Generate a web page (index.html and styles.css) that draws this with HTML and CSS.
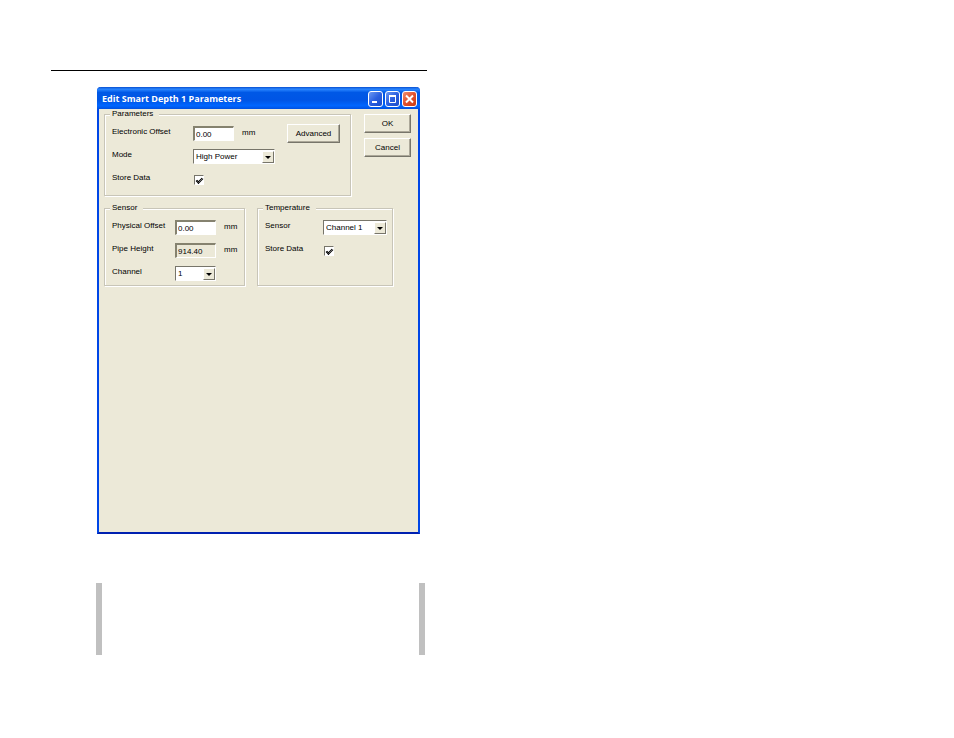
FILE: index.html
```html
<!DOCTYPE html>
<html lang="en">
<head>
  <meta charset="UTF-8">
  <title>Edit Smart Depth 1 Parameters</title>
  <link rel="stylesheet" href="styles.css">
</head>
<body>
  <main class="sheet">
    <hr class="rule">
    <section class="window">
      <header class="titlebar">
        <h1>Edit Smart Depth 1 Parameters</h1>
        <button type="button" class="caption" aria-label="Minimize">
          <svg viewBox="0 0 13 14"><path d="M3 10h5" stroke="#fff" stroke-width="2"/></svg>
        </button>
        <button type="button" class="caption" aria-label="Maximize">
          <svg viewBox="0 0 13 14"><path d="M3.5 4v6.5h6V4" fill="none" stroke="#fff"/><path d="M3 4h7" stroke="#fff" stroke-width="2"/></svg>
        </button>
        <button type="button" class="caption close" aria-label="Close">
          <svg viewBox="0 0 13 14"><path d="M3 3.5l7 7M10 3.5l-7 7" stroke="#fff" stroke-width="2"/></svg>
        </button>
      </header>
      <form class="content">
        <div class="top">
          <fieldset class="parameters">
            <legend>Parameters</legend>
            <div class="row">
              <label for="electronic-offset">Electronic Offset</label>
              <input type="text" id="electronic-offset" value="0.00">
              <span class="unit">mm</span>
              <button type="button" class="btn advanced">Advanced</button>
            </div>
            <div class="row">
              <label for="mode">Mode</label>
              <span class="combo wide">
                <select id="mode"><option>High Power</option></select>
                <svg viewBox="0 0 10 10"><path d="M2 4h6L5 7z"/></svg>
              </span>
            </div>
            <div class="row">
              <label for="store-data">Store Data</label>
              <input type="checkbox" id="store-data" checked>
            </div>
          </fieldset>
          <div class="actions">
            <button type="button" class="btn">OK</button>
            <button type="button" class="btn">Cancel</button>
          </div>
        </div>
        <div class="bottom">
          <fieldset class="sensor">
            <legend>Sensor</legend>
            <div class="row">
              <label for="physical-offset">Physical Offset</label>
              <input type="text" id="physical-offset" value="0.00">
              <span class="unit">mm</span>
            </div>
            <div class="row">
              <label for="pipe-height">Pipe Height</label>
              <input type="text" id="pipe-height" value="914.40" readonly>
              <span class="unit">mm</span>
            </div>
            <div class="row">
              <label for="channel">Channel</label>
              <span class="combo">
                <select id="channel"><option>1</option></select>
                <svg viewBox="0 0 10 10"><path d="M2 4h6L5 7z"/></svg>
              </span>
            </div>
          </fieldset>
          <fieldset class="temperature">
            <legend>Temperature</legend>
            <div class="row">
              <label for="temp-sensor">Sensor</label>
              <span class="combo medium">
                <select id="temp-sensor"><option>Channel 1</option></select>
                <svg viewBox="0 0 10 10"><path d="M2 4h6L5 7z"/></svg>
              </span>
            </div>
            <div class="row">
              <label for="temp-store">Store Data</label>
              <input type="checkbox" id="temp-store" checked>
            </div>
          </fieldset>
        </div>
      </form>
    </section>
    <aside class="note"></aside>
  </main>
</body>
</html>
```
FILE: styles.css
```css
* { box-sizing: border-box; }
body { margin: 0; padding: 70px 51px; background: #fff; color: #000; font: 8px/10px "Liberation Sans", Arial, sans-serif; }
input, select, button { font: inherit; color: inherit; margin: 0; }
.sheet { max-width: 376px; }
.rule { margin: 0; border: 0; border-top: 1px solid #000; }

.window { margin: 16px 7px 0 46px; border: 2px solid #0046e6; border-top: 0; border-bottom-color: #0020b0; border-radius: 4px 4px 0 0; background: #ece9d8; }
.titlebar { display: flex; align-items: center; gap: 2px; height: 22px; margin: 0 -2px; padding: 2px 3px 0 5px; border-radius: 4px 4px 0 0; background: linear-gradient(#0a50d0, #2a86ff 10%, #0058e6 25%, #0055e5 60%, #0066ff 85%, #0050e0); }
.titlebar h1 { flex: 1; margin: 0; color: #fff; font: bold 9px/12px "Open Sans", sans-serif; white-space: nowrap; }
.caption { width: 15px; height: 16px; padding: 0; border: 1px solid #fff; border-radius: 3px; background: linear-gradient(135deg, #6c98f2, #2a5fe0 50%, #1c4cc8); }
.caption svg { display: block; width: 13px; height: 14px; }
.close { background: linear-gradient(135deg, #f09070, #e0502c 50%, #c83c14); }

.content { min-height: 423px; padding: 0 7px 0 5px; }
.top { display: flex; gap: 13px; }
.bottom { display: grid; grid-template-columns: 141fr 136fr; gap: 12px; margin: 7px 18px 0 0; }
.actions { display: flex; flex-direction: column; gap: 5px; width: 47px; padding-top: 5px; }

fieldset { min-width: 0; margin: 0; padding: 3px 6px 0 7px; border: 1px solid #c8c5b8; box-shadow: inset 1px 1px #fff, 1px 1px #fff; }
legend { height: 10px; margin-left: -2px; padding: 0 6px 0 2px; background: #ece9d8; }
.parameters { flex: 1; padding-right: 10px; padding-bottom: 4px; }
.row { display: flex; align-items: center; gap: 8px; height: 23px; }
.row label { flex: none; padding-bottom: 4px; white-space: nowrap; }
.unit { padding-bottom: 1px; }
.parameters label { width: 73px; }
.sensor label { width: 55px; }
.temperature label { width: 50px; }

input[type='text'] { width: 41px; height: 15px; padding: 0 1px; border: 2px solid; border-color: #85826f #fff #fff #85826f; border-width: 2px 1px 1px 2px; background: #fff; }
input[readonly] { background: #ece9d8; }
input[type='checkbox'] { appearance: none; width: 10px; height: 10px; margin-left: 1px; border: 1px solid; border-color: #77756a #fff #fff #77756a; background: #fff; }
input[type='checkbox']:checked::before { content: ""; display: block; width: 6px; height: 3px; margin: 2px 1px; border: solid #000; border-width: 0 0 1px 1px; box-shadow: inset 1px -1px #000; transform: rotate(-45deg); }

.btn { height: 19px; padding: 0; border: 1px solid; border-color: #fff #77756a #77756a #fff; box-shadow: inset -1px -1px #aca899; background: #ece9d8; }
.advanced { width: 53px; margin-left: auto; }

.combo { position: relative; flex: none; width: 41px; height: 15px; }
.combo.wide { width: 82px; }
.combo.medium { width: 64px; }
.combo select { appearance: none; display: block; width: 100%; height: 15px; padding: 1px 12px 0 2px; border: 1px solid; border-color: #77756a #fff #fff #77756a; border-radius: 0; background: #fff; }
.combo svg { position: absolute; top: 2px; right: 1px; width: 12px; height: 12px; border: 1px solid; border-color: #fff #77756a #77756a #fff; background: #ece9d8; pointer-events: none; }

.note { height: 72px; margin: 49px 2px 0 45px; border: solid #c0c0c0; border-width: 0 6px; }
```
